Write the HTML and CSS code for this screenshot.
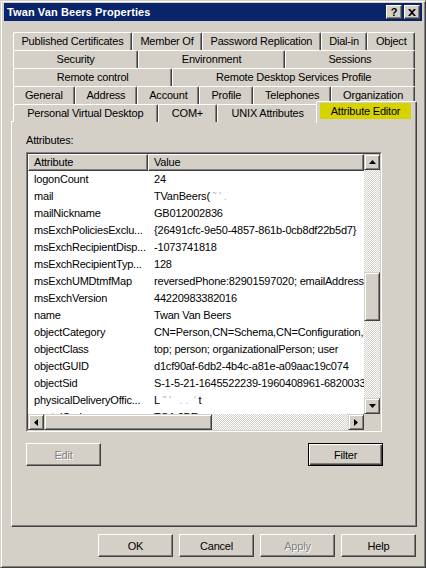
FILE: index.html
```html
<!DOCTYPE html>
<html lang="en">
<head>
  <meta charset="UTF-8">
  <title>Twan Van Beers Properties</title>
  <link rel="stylesheet" href="styles.css">
</head>
<body>
  <div class="window">
    <!-- Title bar -->
    <div class="titlebar">
      <span class="title">Twan Van Beers Properties</span>
      <div class="caption-btns">
        <span class="cap-btn help">?</span>
        <span class="cap-btn close">
          <svg width="8" height="7" viewBox="0 0 8 7"><path d="M0 0h2l2 2 2-2h2L5 3.5 8 7H6L4 5 2 7H0l3-3.5z" fill="#000"/></svg>
        </span>
      </div>
    </div>

    <div class="dialog">
      <!-- Tab strip, five rows; the row holding the active tab sits at the bottom -->
      <div class="tabs">
        <div class="tab-row">
          <span class="tab">Published Certificates</span>
          <span class="tab">Member Of</span>
          <span class="tab">Password Replication</span>
          <span class="tab">Dial-in</span>
          <span class="tab">Object</span>
        </div>
        <div class="tab-row">
          <span class="tab">Security</span>
          <span class="tab">Environment</span>
          <span class="tab">Sessions</span>
        </div>
        <div class="tab-row">
          <span class="tab">Remote control</span>
          <span class="tab">Remote Desktop Services Profile</span>
        </div>
        <div class="tab-row">
          <span class="tab">General</span>
          <span class="tab">Address</span>
          <span class="tab">Account</span>
          <span class="tab">Profile</span>
          <span class="tab">Telephones</span>
          <span class="tab">Organization</span>
        </div>
        <div class="tab-row">
          <span class="tab">Personal Virtual Desktop</span>
          <span class="tab">COM+</span>
          <span class="tab">UNIX Attributes</span>
          <span class="tab active"><span class="hl">Attribute Editor</span></span>
        </div>
      </div>

      <!-- Attribute Editor page -->
      <div class="panel">
        <div class="label">Attributes:</div>
        <div class="listbox">
          <div class="list-inner">
            <div class="view">
              <div class="head">
                <span class="hcell c1">Attribute</span>
                <span class="hcell c2">Value</span>
              </div>
              <div class="row"><span class="k">logonCount</span><span class="v">24</span></div>
              <div class="row"><span class="k">mail</span><span class="v">TVanBeers(<span class="smudge">&nbsp;˜ &#39; .</span></span></div>
              <div class="row"><span class="k">mailNickname</span><span class="v">GB012002836</span></div>
              <div class="row"><span class="k">msExchPoliciesExclu...</span><span class="v">{26491cfc-9e50-4857-861b-0cb8df22b5d7}</span></div>
              <div class="row"><span class="k">msExchRecipientDisp...</span><span class="v">-1073741818</span></div>
              <div class="row"><span class="k">msExchRecipientTyp...</span><span class="v">128</span></div>
              <div class="row"><span class="k">msExchUMDtmfMap</span><span class="v">reversedPhone:82901597020; emailAddress:8826</span></div>
              <div class="row"><span class="k">msExchVersion</span><span class="v">44220983382016</span></div>
              <div class="row"><span class="k">name</span><span class="v">Twan Van Beers</span></div>
              <div class="row"><span class="k">objectCategory</span><span class="v">CN=Person,CN=Schema,CN=Configuration,DC=corp</span></div>
              <div class="row"><span class="k">objectClass</span><span class="v">top; person; organizationalPerson; user</span></div>
              <div class="row"><span class="k">objectGUID</span><span class="v">d1cf90af-6db2-4b4c-a81e-a09aac19c074</span></div>
              <div class="row"><span class="k">objectSid</span><span class="v">S-1-5-21-1645522239-1960408961-682003330</span></div>
              <div class="row"><span class="k">physicalDeliveryOffic...</span><span class="v">L<span class="smudge">&nbsp;˜ &#39;&nbsp;&nbsp;&nbsp;. .&nbsp;&nbsp;&#39;</span>&nbsp;t</span></div>
              <div class="row"><span class="k">postalCode</span><span class="v">TQ1 2BE</span></div>
            </div>

            <div class="vscroll">
              <span class="sb-btn">
                <svg width="7" height="4" viewBox="0 0 7 4"><path d="M3.5 0L7 4H0z" fill="#000"/></svg>
              </span>
              <div class="track">
                <div class="thumb vthumb"></div>
              </div>
              <span class="sb-btn">
                <svg width="7" height="4" viewBox="0 0 7 4"><path d="M0 0h7L3.5 4z" fill="#000"/></svg>
              </span>
            </div>

            <div class="hscroll">
              <span class="sb-btn">
                <svg width="4" height="7" viewBox="0 0 4 7"><path d="M4 0v7L0 3.5z" fill="#000"/></svg>
              </span>
              <div class="track htrack">
                <div class="thumb hthumb"></div>
              </div>
              <span class="sb-btn">
                <svg width="4" height="7" viewBox="0 0 4 7"><path d="M0 0l4 3.5L0 7z" fill="#000"/></svg>
              </span>
            </div>
            <div class="corner"></div>
          </div>
        </div>

        <div class="list-actions">
          <span class="btn disabled">Edit</span>
          <span class="btn default">Filter</span>
        </div>
      </div>

      <!-- Dialog buttons -->
      <div class="footer">
        <span class="btn">OK</span>
        <span class="btn">Cancel</span>
        <span class="btn disabled">Apply</span>
        <span class="btn">Help</span>
      </div>
    </div>
  </div>
</body>
</html>
```

FILE: styles.css
```css
/* Reset */
* { margin: 0; padding: 0; box-sizing: border-box; }

body {
  background: #d4d0c8;
  font: 11px "Liberation Sans", Arial, sans-serif;
  color: #000;
}

/* Window frame */
.window {
  width: 426px;
  height: 568px;
  border: 1px solid;
  border-color: #d4d0c8 #404040 #404040 #d4d0c8;
  box-shadow: inset 1px 1px #fff, inset -1px -1px #808080;
  padding: 2px 3px;
  background: #d4d0c8;
}

/* Title bar */
.titlebar {
  height: 18px;
  display: flex;
  align-items: center;
  padding: 0 2px 0 3px;
  background: #0a246a;
  color: #fff;
}
.title {
  font-weight: bold;
  font-size: 11px;
  letter-spacing: 0.1px;
}
.caption-btns {
  margin-left: auto;
  display: flex;
  gap: 2px;
}
.cap-btn {
  width: 16px;
  height: 14px;
  display: flex;
  align-items: center;
  justify-content: center;
  background: #d4d0c8;
  color: #000;
  font-weight: bold;
  font-size: 11px;
  border: 1px solid;
  border-color: #fff #404040 #404040 #fff;
  box-shadow: inset -1px -1px #808080;
}

/* Dialog body */
.dialog {
  padding: 11px 5px 0 7px;
}

/* Tabs */
.tabs {
  margin: 0 2px;
}
.tab-row {
  display: flex;
  height: 18px;
}
.tab {
  flex: 1 1 auto;
  height: 18px;
  padding: 0 4px;
  line-height: 16px;
  text-align: center;
  white-space: nowrap;
  letter-spacing: -0.2px;
  border-top: 1px solid #fff;
  border-left: 1px solid #fff;
  border-right: 1px solid #404040;
  box-shadow: inset -1px 0 #808080;
  border-radius: 2px 2px 0 0;
  background: #d4d0c8;
}
.tab.active {
  position: relative;
  z-index: 1;
  flex: 0 0 101px;
  height: 22px;
  margin: -3px -2px -1px;
  padding: 0 5px 0 3px;
}
.hl {
  display: block;
  margin-top: 1px;
  line-height: 16px;
  background: #d6d300;
}

/* Tab page */
.panel {
  height: 406px;
  margin-top: -1px;
  border: 1px solid;
  border-color: #fff #404040 #404040 #fff;
  box-shadow: inset -1px -1px #808080;
  padding: 12px 14px 0;
}
.label {
  line-height: 13px;
  letter-spacing: -0.2px;
}

/* List view */
.listbox {
  width: 356px;
  height: 280px;
  margin-top: 5px;
  border: 1px solid;
  border-color: #808080 #fff #fff #808080;
}
.list-inner {
  height: 100%;
  border: 1px solid;
  border-color: #404040 #d4d0c8 #d4d0c8 #404040;
  display: grid;
  grid-template-columns: 1fr 16px;
  grid-template-rows: 1fr 16px;
}
.view {
  background: #fff;
  overflow: hidden;
}
.head {
  display: flex;
  height: 17px;
}
.hcell {
  height: 17px;
  line-height: 15px;
  padding-left: 5px;
  background: #d4d0c8;
  border: 1px solid;
  border-color: #fff #404040 #404040 #fff;
  box-shadow: inset -1px -1px #808080;
  letter-spacing: -0.2px;
}
.hcell.c1 { width: 120px; flex: none; }
.hcell.c2 { flex: 1; }

.row {
  display: flex;
  height: 17px;
  line-height: 17px;
  white-space: nowrap;
  letter-spacing: -0.2px;
}
.row .k {
  width: 120px;
  flex: none;
  padding-left: 6px;
  overflow: hidden;
}
.row .v {
  padding-left: 6px;
}
.smudge { color: #b8b8b8; }

/* Scroll bars */
.vscroll {
  display: flex;
  flex-direction: column;
}
.hscroll {
  display: flex;
}
.sb-btn {
  width: 16px;
  height: 16px;
  flex: none;
  display: flex;
  align-items: center;
  justify-content: center;
  background: #d4d0c8;
  border: 1px solid;
  border-color: #d4d0c8 #404040 #404040 #d4d0c8;
  box-shadow: inset 1px 1px #fff, inset -1px -1px #808080;
}
.track {
  flex: 1;
  background-color: #fff;
  background-image: conic-gradient(#d4d0c8 25%, #fff 0 50%, #d4d0c8 0 75%, #fff 0);
  background-size: 2px 2px;
}
.thumb {
  background: #d4d0c8;
  border: 1px solid;
  border-color: #d4d0c8 #404040 #404040 #d4d0c8;
  box-shadow: inset 1px 1px #fff, inset -1px -1px #808080;
}
.vthumb {
  height: 49px;
  margin-top: 102px;
}
.htrack { display: flex; }
.hthumb {
  width: 168px;
}
.corner { background: #d4d0c8; }

/* Push buttons */
.btn {
  width: 75px;
  height: 23px;
  display: flex;
  align-items: center;
  justify-content: center;
  background: #d4d0c8;
  border: 1px solid;
  border-color: #fff #404040 #404040 #fff;
  box-shadow: inset -1px -1px #808080;
  letter-spacing: -0.2px;
}
.btn.default {
  border-color: #000;
  box-shadow: inset 1px 1px #fff, inset -1px -1px #404040, inset -2px -2px #808080;
}
.btn.disabled {
  color: #808080;
  text-shadow: 1px 1px #fff;
}

.list-actions {
  width: 357px;
  margin-top: 11px;
  display: flex;
  justify-content: space-between;
}

.footer {
  display: flex;
  justify-content: flex-end;
  gap: 6px;
  margin-top: 7px;
  padding-right: 1px;
}
```
